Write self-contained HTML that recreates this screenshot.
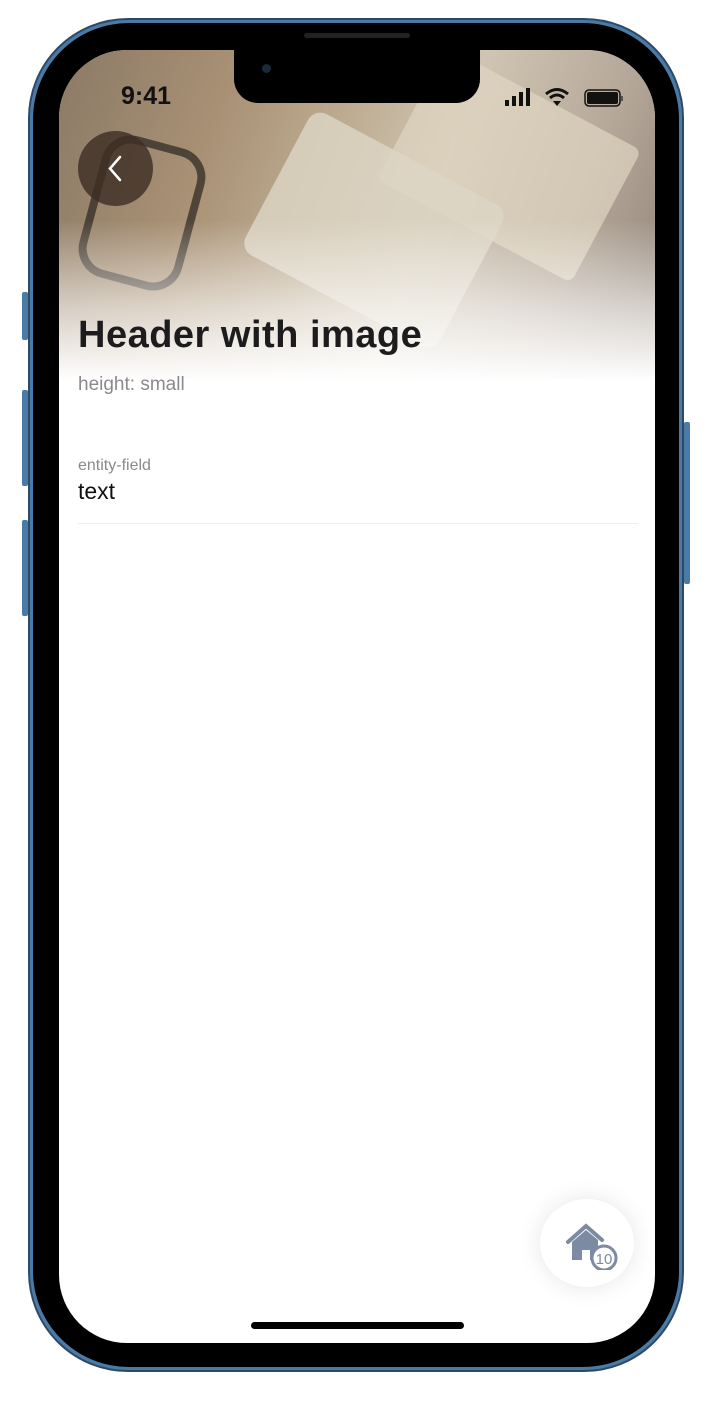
<!DOCTYPE html>
<html><head><style>
body{margin:0;width:712px;height:1405px;background:#fff;position:relative;overflow:hidden;font-family:"Liberation Sans",sans-serif}
.frame{position:absolute;left:28px;top:18px;width:652px;height:1350px;border-radius:100px;background:#4a7aa6;border:2px solid #2c4a66}
.bezel{position:absolute;left:33px;top:23px;width:646px;height:1344px;border-radius:96px;background:#000}
.screen{position:absolute;left:59px;top:50px;width:596px;height:1293px;border-radius:68px;background:#fff;overflow:hidden}
.img{position:absolute;left:0;top:0;width:596px;height:330px;background:linear-gradient(110deg,#8b7a66 0%,#a89074 25%,#bfae94 45%,#cfc5b2 60%,#b7a99a 80%,#8f8378 100%)}
.fade{position:absolute;left:0;top:170px;width:596px;height:161px;background:linear-gradient(rgba(255,255,255,0),rgba(255,255,255,.6) 55%,#fff)}
.nb{position:absolute;left:205px;top:100px;width:220px;height:160px;background:#ddd6c6;border-radius:14px;transform:rotate(28deg);opacity:.8}
.nb2{position:absolute;left:340px;top:40px;width:220px;height:150px;background:#e0d6c2;border-radius:8px;transform:rotate(28deg);opacity:.7}
.notch{position:absolute;left:234px;top:50px;width:246px;height:53px;background:#000;border-radius:0 0 24px 24px}
.back{position:absolute;left:78px;top:131px;width:75px;height:75px;border-radius:50%;background:rgba(60,45,35,.8)}
</style></head><body>
<div style="position:absolute;left:22px;top:292px;width:6px;height:48px;background:#4a7aa6;border-radius:2px"></div>
<div style="position:absolute;left:22px;top:390px;width:6px;height:96px;background:#4a7aa6;border-radius:2px"></div>
<div style="position:absolute;left:22px;top:520px;width:6px;height:96px;background:#4a7aa6;border-radius:2px"></div>
<div style="position:absolute;left:684px;top:422px;width:6px;height:162px;background:#4a7aa6;border-radius:2px"></div>
<div class="frame"></div><div class="bezel"></div>
<div class="screen">
<div class="img"><div class="nb2"></div><div class="nb"></div>
<div style="position:absolute;left:30px;top:90px;width:90px;height:130px;border:8px solid #2a2420;border-radius:30px;transform:rotate(15deg);opacity:.7"></div></div>
<div class="fade"></div>
<div style="position:absolute;left:19px;top:264px;font-size:38px;font-weight:bold;color:#1c1c1e;letter-spacing:0.5px">Header with image</div>
<div style="position:absolute;left:19px;top:324px;font-size:19px;color:#8a8a8e">height: small</div>
<div style="position:absolute;left:19px;top:407px;font-size:16px;color:#8a8a8e">entity-field</div>
<div style="position:absolute;left:19px;top:428px;font-size:23px;color:#111">text</div>
<div style="position:absolute;left:19px;top:473px;width:560px;height:1px;background:#eee"></div>
<div style="position:absolute;left:481px;top:1149px;width:94px;height:88px;border-radius:50%;background:#fff;box-shadow:0 0 24px rgba(0,0,0,.1)"></div>
<svg style="position:absolute;left:505px;top:1170px" width="60" height="50" viewBox="0 0 60 50"><path d="M4 22 L22 6 L38 20" fill="none" stroke="#7d8aa3" stroke-width="4" stroke-linecap="round"/><path d="M8 22 L22 10 L34 20 L34 40 L26 40 L26 30 L18 30 L18 40 L8 40Z" fill="#7d8aa3"/><circle cx="40" cy="38" r="12" fill="#fff" stroke="#7d8aa3" stroke-width="3"/><text x="40" y="44" font-size="15" text-anchor="middle" fill="#7d8aa3" font-family="Liberation Sans">10</text></svg>
<div style="position:absolute;left:192px;top:1272px;width:213px;height:7px;border-radius:4px;background:#000"></div>
</div>
<div class="notch"></div>
<div style="position:absolute;left:304px;top:33px;width:106px;height:5px;border-radius:3px;background:#222"></div>
<div style="position:absolute;left:262px;top:64px;width:9px;height:9px;border-radius:50%;background:#1a2a3a"></div>
<div class="back"><svg width="75" height="75"><path d="M42 26 L32 37.5 L42 49" fill="none" stroke="#fff" stroke-width="2.5" stroke-linecap="round"/></svg></div>
<div style="position:absolute;left:121px;top:82px;font-size:25px;font-weight:bold;color:#111">9:41</div>
<svg style="position:absolute;left:503px;top:86px" width="125" height="24"><rect x="2" y="14" width="4" height="6" fill="#111"/><rect x="9" y="10" width="4" height="10" fill="#111"/><rect x="16" y="6" width="4" height="14" fill="#111"/><rect x="23" y="2" width="4" height="18" fill="#111"/><path d="M43 8 Q54 -1 65 8 M47 12 Q54 6 61 12" fill="none" stroke="#111" stroke-width="3"/><path d="M50 15 L54 20 L58 15Z" fill="#111"/><rect x="82" y="4" width="35" height="16" rx="4" fill="none" stroke="#111" stroke-width="1.5"/><rect x="84" y="6" width="31" height="12" rx="2" fill="#111"/><rect x="118" y="10" width="2" height="5" fill="#555"/></svg>
</body></html>
